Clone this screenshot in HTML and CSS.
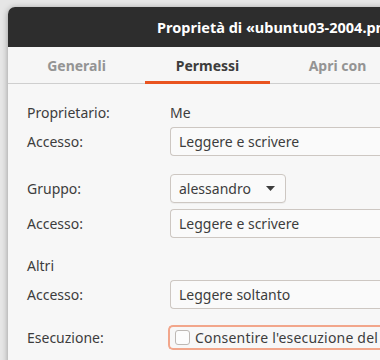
FILE: index.html
```html
<!DOCTYPE html>
<html lang="it">

<head>
  <meta charset="UTF-8" />
  <meta name="viewport" content="width=device-width, initial-scale=1.0" />
  <title>Proprietà di «ubuntu03-2004.png»</title>
  <link rel="stylesheet" href="styles.css">
</head>

<body>
  <div class="window">
    <header class="titlebar">
      <div class="title">Proprietà di «ubuntu03-2004.png»</div>
    </header>

    <nav class="tabs">
      <a href="#" class="tab tab-general">Generali</a>
      <a href="#" class="tab tab-perms active">Permessi</a>
      <a href="#" class="tab tab-open">Apri con</a>
    </nav>

    <main class="perms">
      <div class="row row-owner">
        <span class="label">Proprietario:</span>
        <span class="value">Me</span>
      </div>
      <div class="row row-field">
        <span class="label">Accesso:</span>
        <div class="entry">Leggere e scrivere</div>
      </div>

      <div class="row row-field row-group">
        <span class="label">Gruppo:</span>
        <div class="combo">
          alessandro
          <svg class="arrow" width="9" height="5" viewBox="0 0 9 5"><path d="M0 0h9L4.5 5z" fill="#3d3d3d"/></svg>
        </div>
      </div>
      <div class="row row-field row-tight">
        <span class="label">Accesso:</span>
        <div class="entry">Leggere e scrivere</div>
      </div>

      <div class="row row-section">
        <span class="label">Altri</span>
      </div>
      <div class="row row-field row-tight">
        <span class="label">Accesso:</span>
        <div class="entry">Leggere soltanto</div>
      </div>

      <div class="row row-exec">
        <span class="label">Esecuzione:</span>
        <label class="check">
          <span class="box"></span>
          <span class="check-text">Consentire l'esecuzione del file come programma</span>
        </label>
      </div>
    </main>
  </div>
</body>

</html>
```

FILE: styles.css
```css
* {
  margin: 0;
  padding: 0;
  box-sizing: border-box;
}

body {
  font-family: 'Noto Sans', 'DejaVu Sans', sans-serif;
  background: #e6e6e6;
  color: #3d3d3d;
  overflow: hidden;
  width: 380px;
  height: 360px;
  padding: 7px 0 0 8px;
}

.window {
  width: 460px;
  height: 400px;
  background: #f7f7f7;
  border-radius: 7px 7px 0 0;
  box-shadow: 0 1px 6px rgba(0, 0, 0, 0.35);
  overflow: hidden;
}

.titlebar {
  height: 40px;
  background: #2d2d2d;
  display: flex;
  align-items: center;
}

.title {
  padding-left: 149px;
  color: #fff;
  font-weight: 700;
  font-size: 14.5px;
  white-space: nowrap;
}

.tabs {
  display: flex;
  height: 37px;
  background: #f6f6f6;
  border-bottom: 1px solid #cfcfcf;
}

.tab {
  display: flex;
  justify-content: center;
  align-items: center;
  text-decoration: none;
  color: #949494;
  font-weight: 700;
  font-size: 14px;
  border-bottom: 3px solid transparent;
  margin-bottom: -1px;
  padding-top: 2px;
}

.tab-general { width: 137px; }
.tab-perms { width: 125px; }
.tab-open { width: 135px; }

.tab.active {
  color: #3d3d3d;
  border-bottom-color: #e95420;
}

.perms {
  padding: 18px 0 0 19px;
  font-size: 14px;
}

.row {
  display: grid;
  grid-template-columns: 143px 1fr;
  align-items: center;
}

.row-owner {
  height: 20px;
}

.row-field {
  margin-top: 5px;
}

.row-group {
  margin-top: 18px;
}

.row-group + .row-tight {
  margin-top: 6px;
}

.row-section {
  height: 20px;
  margin-top: 17px;
}

.row-exec {
  margin-top: 16px;
}

.entry,
.combo {
  height: 29px;
  display: flex;
  align-items: center;
  padding-left: 8px;
  background: #fafafa;
  border: 1px solid #cdc7c2;
  border-radius: 4px;
  white-space: nowrap;
}

.entry {
  border-radius: 4px 0 0 4px;
  border-right: none;
}

.combo {
  width: 116px;
  justify-content: space-between;
  padding-right: 10px;
  box-shadow: 0 1px 0 rgba(0, 0, 0, 0.04);
}

.check {
  height: 25px;
  display: flex;
  align-items: center;
  gap: 5px;
  margin-left: -2px;
  padding-left: 5px;
  border: 2px solid #f2a68b;
  border-right: none;
  border-radius: 5px 0 0 5px;
  white-space: nowrap;
}

.check-text {
  letter-spacing: 0.2px;
}

.box {
  width: 15px;
  height: 15px;
  border: 1px solid #bdb8b4;
  border-radius: 3px;
  background: #fcfcfc;
}
```
